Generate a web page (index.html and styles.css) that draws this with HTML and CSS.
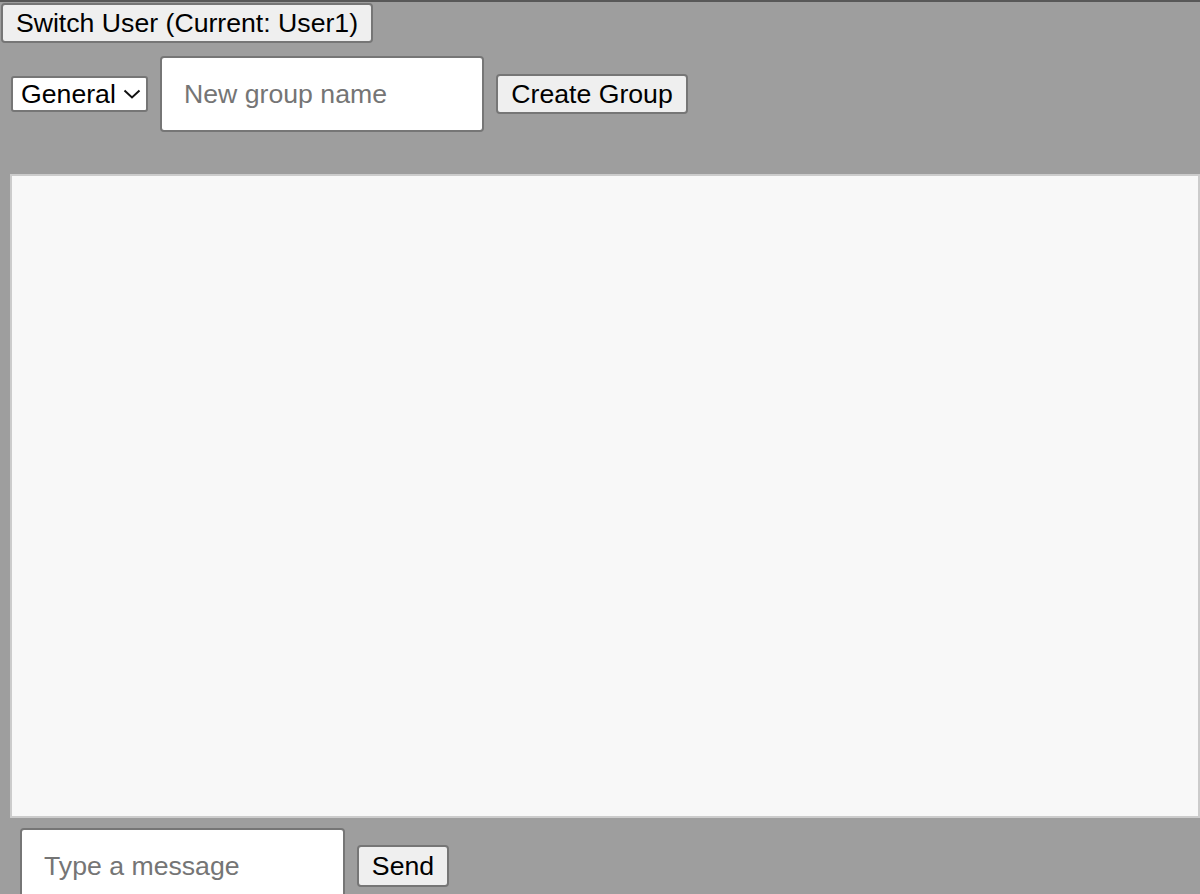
FILE: index.html
```html
<!DOCTYPE html>
<html>
<head>
<meta charset="utf-8">
<link rel="stylesheet" href="styles.css">
</head>
<body>
<div class="app">
  <div class="user-row">
    <button class="btn switch-btn">Switch User (Current: User1)</button>
  </div>
  <div class="group-row">
    <div class="select-wrap">
      <select class="group-select">
        <option>General</option>
      </select>
      <svg class="select-arrow" width="18" height="10" viewBox="0 0 18 10"><path d="M1.5 1.5 L9 8.5 L16.5 1.5" fill="none" stroke="#111" stroke-width="2"/></svg>
    </div>
    <input class="text-input group-input" type="text" placeholder="New group name">
    <button class="btn create-btn">Create Group</button>
  </div>
  <div class="chat-box"></div>
  <div class="message-row">
    <input class="text-input message-input" type="text" placeholder="Type a message">
    <button class="btn send-btn">Send</button>
  </div>
</div>
</body>
</html>
```
FILE: styles.css
```css
* { box-sizing: border-box; }
html, body {
  margin: 0;
  padding: 0;
  height: 100%;
  overflow: hidden;
}
body {
  background: #9e9e9e;
  border-top: 2px solid #585858;
  font-family: "Liberation Sans", Arial, sans-serif;
}
.app {
  display: flex;
  flex-direction: column;
}
.btn {
  font-family: "Liberation Sans", Arial, sans-serif;
  font-size: 26.67px;
  color: #000;
  background: #efefef;
  border: 2px solid #767676;
  border-radius: 4px;
  height: 40px;
  padding: 0;
  line-height: 1;
  text-align: center;
}
.user-row {
  display: flex;
  padding: 1px 0 0 1px;
}
.switch-btn { width: 372px; }
.create-btn { width: 192px; }
.group-row {
  display: flex;
  align-items: center;
  gap: 12px;
  margin: 13px 0 0 11px;
}
.select-wrap {
  position: relative;
  display: flex;
}
.group-select {
  -webkit-appearance: none;
  appearance: none;
  font-family: "Liberation Sans", Arial, sans-serif;
  font-size: 26.67px;
  height: 36px;
  width: 137px;
  background: #fff;
  color: #000;
  border: 2px solid #767676;
  border-radius: 3px;
  padding: 0 0 0 8px;
  line-height: 1;
}
.select-arrow {
  position: absolute;
  right: 7px;
  top: 13px;
  pointer-events: none;
}
.text-input {
  font-family: "Liberation Sans", Arial, sans-serif;
  font-size: 26.67px;
  background: #fff;
  border: 2px solid #767676;
  border-radius: 4px;
  height: 76px;
  padding: 0 22px;
  color: #000;
}
.text-input::placeholder { color: #757575; }
.group-input { width: 324px; }
.chat-box {
  margin: 42px 0 0 10px;
  width: 1190px;
  height: 644px;
  background: #f8f8f8;
  border: 2px solid #cccccc;
  flex: none;
}
.message-row {
  display: flex;
  align-items: center;
  gap: 12px;
  margin: 10px 0 0 20px;
}
.message-input { width: 325px; }
.send-btn {
  width: 92px;
  height: 42px;
}
```
